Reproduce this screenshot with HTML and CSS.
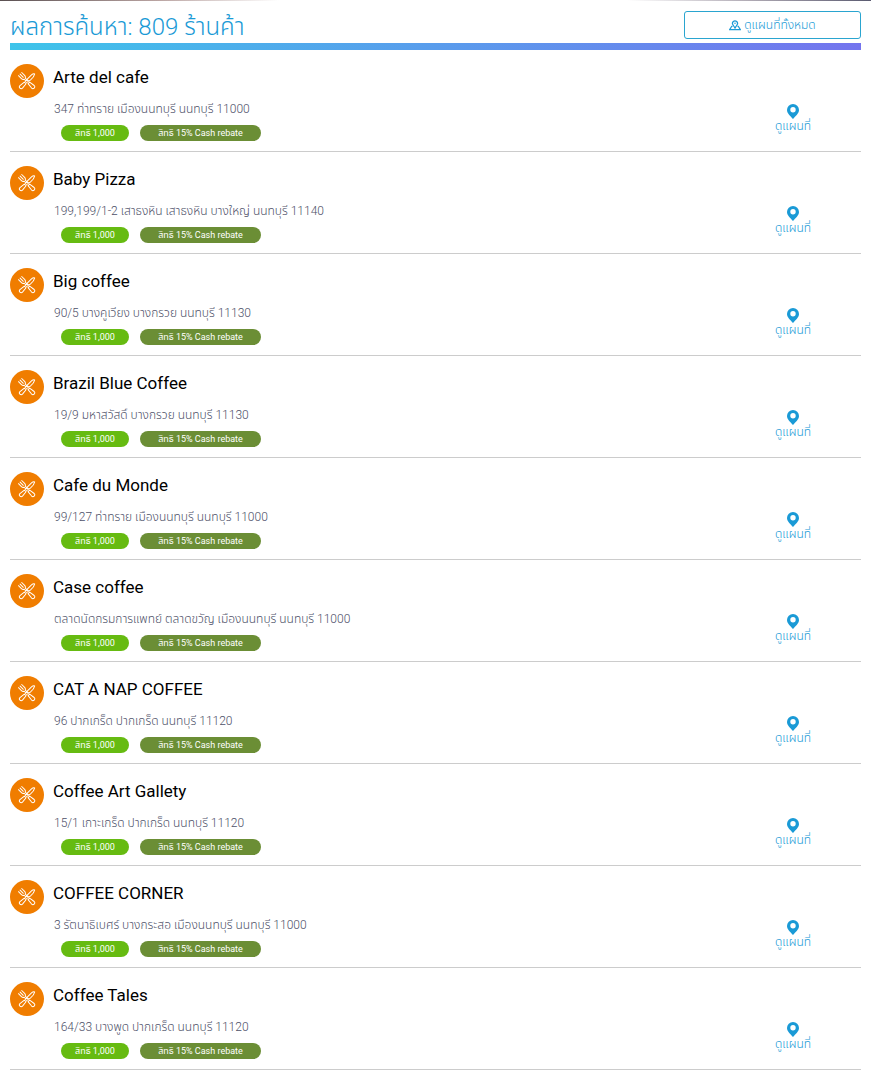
FILE: index.html
```
<!DOCTYPE html>
<html lang="th">
<head>
<meta charset="utf-8">
<meta name="viewport" content="width=device-width, initial-scale=1">
<title>ผลการค้นหา</title>
<link rel="stylesheet" href="styles.css">
</head>
<body>
  <div class="banner"></div>
  <main class="results">
    <header class="results__header">
      <h1 class="results__title">ผลการค้นหา: 809 ร้านค้า</h1>
      <button class="results__map" type="button">
        <svg class="results__map-icon" viewBox="0 0 24 24"><path d="M7 14.500H5.500L1.500 21h21l-4-6.500H17M12 18l-4.200-6.500a5 5 0 1 1 8.400 0z" fill="none" stroke="currentColor" stroke-width="2.500"/><circle cx="12" cy="8.500" r="1.500" fill="currentColor"/></svg>
        ดูแผนที่ทั้งหมด
      </button>
    </header>
    <ul class="shops" id="shops"></ul>
  </main>

  <template id="shop">
    <li class="shop">
      <span class="shop__icon">
        <svg class="shop__cutlery" viewBox="0 0 24 24">
          <g fill="none" stroke="currentColor" stroke-width="1.300" stroke-linejoin="round" stroke-linecap="round">
            <g transform="rotate(45 12 12)">
              <path d="M10.500 11V2c0-2 1-3.500 2-4 1.500 2 2.200 6 1.800 10l-.8 3z"/>
              <path d="M10.500 15.500h3.200l.8 7.500a2.200 2.200 0 0 1-4.800 0z"/>
            </g>
            <g transform="rotate(-45 12 12)">
              <path d="M9-1v5.500c0 2 1.200 2.800 2 3.200V11h2V7.700c.8-.4 2-1.200 2-3.200V-1M12-1v6"/>
              <path d="M10.500 15.500h3l1 7.500a2.200 2.200 0 0 1-4.800 0z"/>
            </g>
            <path d="M10 12l2-2 2 2-2 2z"/>
          </g>
        </svg>
      </span>
      <div class="shop__info">
        <h2 class="shop__name"></h2>
        <p class="shop__address"></p>
        <div class="shop__tags">
          <span class="tag tag_point">สิทธิ 1,000</span>
          <span class="tag tag_rebate">สิทธิ 15% Cash rebate</span>
        </div>
      </div>
      <a class="shop__map" href="#">
        <svg class="shop__pin" viewBox="0 0 12 15"><path d="M6 0a6 6 0 0 0-6 6c0 3.500 3.500 6 6 9 2.500-3 6-5.500 6-9a6 6 0 0 0-6-6zm0 3a2.700 2.700 0 1 1 0 5.400A2.700 2.700 0 0 1 6 3z" fill="currentColor" fill-rule="evenodd"/></svg>
        <span>ดูแผนที่</span>
      </a>
    </li>
  </template>
  <script src="script.js"></script>
</body>
</html>
```
FILE: styles.css
```
* {
    box-sizing: border-box;
}

body {
    margin: 0;
    background: #fff;
    font-family: "Roboto", "Noto Sans Thai", "Noto Sans", sans-serif;
    color: #000;
}

.banner {
    height: 1px;
    background: linear-gradient(90deg, #5a5052, #b9a3a1 18%, #fff 32%, #fff 72%, #b0aab4 86%, #5a5a70);
}

.results {
    padding: 0 10px;
}

.results__header {
    display: flex;
    justify-content: space-between;
    align-items: flex-start;
    padding-top: 10px;
    border-bottom: 7px solid;
    border-image: linear-gradient(90deg, #3ec4ea, #7474ee) 1;
}

.results__title {
    margin: 0;
    font-size: 24px;
    line-height: 32px;
    font-weight: 300;
    color: #1a9ad6;
}

.results__map {
    display: flex;
    justify-content: center;
    align-items: center;
    gap: 3px;
    width: 177px;
    height: 28px;
    padding: 0;
    border: 1px solid #2aa5d0;
    border-radius: 3px;
    background: #fff;
    font-family: inherit;
    font-size: 12px;
    font-weight: 300;
    color: #1a9ad6;
    cursor: pointer;
}

.results__map-icon {
    width: 12px;
    height: 12px;
}

.shops {
    margin: 0;
    padding: 0;
    list-style: none;
}

.shop {
    display: flex;
    padding: 14px 0 10px;
    border-bottom: 1px solid #ccc;
}

.shop__icon {
    display: flex;
    justify-content: center;
    align-items: center;
    width: 34px;
    height: 34px;
    border-radius: 50%;
    background: #f07d00;
    color: #fff;
}

.shop__cutlery {
    width: 18px;
    height: 18px;
}

.shop__info {
    flex: 1;
    padding-left: 9px;
}

.shop__name {
    margin: 0;
    font-size: 17px;
    line-height: 26px;
    font-weight: 400;
}

.shop__address {
    margin: 9px 0 6px;
    padding-left: 1px;
    font-size: 12px;
    line-height: 20px;
    font-weight: 300;
    color: #4d5068;
}

.shop__tags {
    display: flex;
    gap: 11px;
    padding-left: 8px;
}

.tag {
    height: 16px;
    border-radius: 8px;
    font-size: 9px;
    line-height: 16px;
    text-align: center;
    color: #fff;
}

.tag_point {
    width: 68px;
    background: #66bb11;
}

.tag_rebate {
    width: 121px;
    background: #6b8e35;
}

.shop__map {
    display: flex;
    flex-direction: column;
    align-items: center;
    align-self: flex-end;
    width: 136px;
    padding-bottom: 8px;
    font-size: 12px;
    line-height: 14px;
    font-weight: 300;
    color: #1a9ad6;
    text-decoration: none;
}

.shop__pin {
    width: 12px;
    height: 15px;
}
```
FILE: script.js
```
const shops = [
  ['Arte del cafe', '347 ท่าทราย เมืองนนทบุรี นนทบุรี 11000'],
  ['Baby Pizza', '199,199/1-2 เสาธงหิน เสาธงหิน บางใหญ่ นนทบุรี 11140'],
  ['Big coffee', '90/5 บางคูเวียง บางกรวย นนทบุรี 11130'],
  ['Brazil Blue Coffee', '19/9 มหาสวัสดิ์ บางกรวย นนทบุรี 11130'],
  ['Cafe du Monde', '99/127 ท่าทราย เมืองนนทบุรี นนทบุรี 11000'],
  ['Case coffee', 'ตลาดนัดกรมการแพทย์ ตลาดขวัญ เมืองนนทบุรี นนทบุรี 11000'],
  ['CAT A NAP COFFEE', '96 ปากเกร็ด ปากเกร็ด นนทบุรี 11120'],
  ['Coffee Art Gallety', '15/1 เกาะเกร็ด ปากเกร็ด นนทบุรี 11120'],
  ['COFFEE CORNER', '3 รัตนาธิเบศร์ บางกระสอ เมืองนนทบุรี นนทบุรี 11000'],
  ['Coffee Tales', '164/33 บางพูด ปากเกร็ด นนทบุรี 11120'],
];

let list = document.getElementById('shops');
let template = document.getElementById('shop');

for (const [name, address] of shops) {
  let item = template.content.cloneNode(true);
  item.querySelector('.shop__name').textContent = name;
  item.querySelector('.shop__address').textContent = address;
  list.append(item);
}
```
